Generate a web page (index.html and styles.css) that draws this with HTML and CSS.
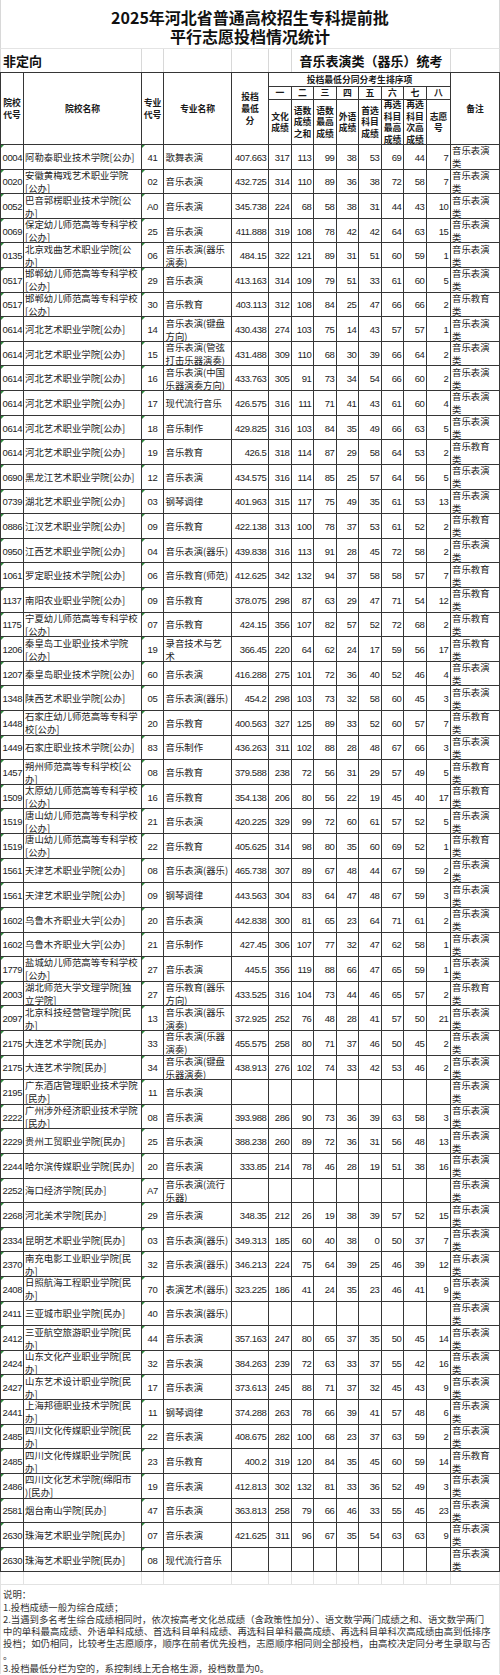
FILE: index.html
```html
<!DOCTYPE html>
<html lang="zh-CN">
<head>
<meta charset="utf-8">
<title>2025年河北省普通高校招生专科提前批平行志愿投档情况统计</title>
<link rel="stylesheet" href="styles.css">
</head>
<body>
<div class="sheet">
  <div class="title">
    <p>2025年河北省普通高校招生专科提前批</p>
    <p>平行志愿投档情况统计</p>
  </div>

  <div class="band">
    <div class="b-left">非定向</div>
    <div></div><div></div><div></div><div></div>
    <div class="b-mid">音乐表演类（器乐）统考</div>
    <div></div>
  </div>

  <div class="tbl">
    <div class="hdr">
      <div class="hc1"><span>院校<br>代号</span></div>
      <div class="hc2">院校名称</div>
      <div class="hc3"><span>专业<br>代号</span></div>
      <div class="hc4">专业名称</div>
      <div class="hc5"><span>投档<br>最低<br>分</span></div>
      <div class="grp">投档最低分同分考生排序项</div>
      <div class="hc14">备注</div>
      <div class="ord">一</div><div class="ord">二</div><div class="ord">三</div><div class="ord">四</div><div class="ord">五</div><div class="ord">六</div><div class="ord">七</div><div class="ord">八</div>
      <div class="lab"><span>文化<br>成绩</span></div>
      <div class="lab"><span>语数<br>成绩<br>之和</span></div>
      <div class="lab"><span>语数<br>最高<br>成绩</span></div>
      <div class="lab"><span>外语<br>成绩</span></div>
      <div class="lab"><span>首选<br>科目<br>成绩</span></div>
      <div class="lab"><span>再选<br>科目<br>最高<br>成绩</span></div>
      <div class="lab"><span>再选<br>科目<br>次高<br>成绩</span></div>
      <div class="lab"><span>志愿<br>号</span></div>
    </div>

    <div class="row"><div>0004</div><div>阿勒泰职业技术学院[公办]</div><div>41</div><div>歌舞表演</div><div>407.663</div><div>317</div><div>113</div><div>99</div><div>38</div><div>53</div><div>69</div><div>44</div><div>7</div><div><span>音乐表演<br>类</span></div></div>
    <div class="row"><div>0020</div><div><span>安徽黄梅戏艺术职业学院<br>[公办]</span></div><div>02</div><div>音乐表演</div><div>432.725</div><div>314</div><div>110</div><div>89</div><div>36</div><div>38</div><div>72</div><div>58</div><div>7</div><div><span>音乐表演<br>类</span></div></div>
    <div class="row"><div>0052</div><div><span>巴音郭楞职业技术学院[公<br>办]</span></div><div>A0</div><div>音乐表演</div><div>345.738</div><div>224</div><div>68</div><div>58</div><div>38</div><div>31</div><div>44</div><div>43</div><div>10</div><div><span>音乐表演<br>类</span></div></div>
    <div class="row"><div>0069</div><div><span>保定幼儿师范高等专科学校<br>[公办]</span></div><div>25</div><div>音乐表演</div><div>411.888</div><div>319</div><div>108</div><div>78</div><div>42</div><div>42</div><div>64</div><div>63</div><div>15</div><div><span>音乐表演<br>类</span></div></div>
    <div class="row"><div>0135</div><div><span>北京戏曲艺术职业学院[公<br>办]</span></div><div>06</div><div><span>音乐表演(器乐<br>演奏)</span></div><div>484.15</div><div>322</div><div>121</div><div>89</div><div>31</div><div>51</div><div>60</div><div>59</div><div>1</div><div><span>音乐表演<br>类</span></div></div>
    <div class="row"><div>0517</div><div><span>邯郸幼儿师范高等专科学校<br>[公办]</span></div><div>29</div><div>音乐表演</div><div>413.163</div><div>314</div><div>109</div><div>79</div><div>51</div><div>33</div><div>61</div><div>60</div><div>5</div><div><span>音乐表演<br>类</span></div></div>
    <div class="row"><div>0517</div><div><span>邯郸幼儿师范高等专科学校<br>[公办]</span></div><div>30</div><div>音乐教育</div><div>403.113</div><div>312</div><div>108</div><div>84</div><div>25</div><div>47</div><div>66</div><div>66</div><div>2</div><div><span>音乐教育<br>类</span></div></div>
    <div class="row"><div>0614</div><div>河北艺术职业学院[公办]</div><div>14</div><div><span>音乐表演(键盘<br>方向)</span></div><div>430.438</div><div>274</div><div>103</div><div>75</div><div>14</div><div>43</div><div>57</div><div>57</div><div>1</div><div><span>音乐表演<br>类</span></div></div>
    <div class="row"><div>0614</div><div>河北艺术职业学院[公办]</div><div>15</div><div><span>音乐表演(管弦<br>打击乐器演奏)</span></div><div>431.488</div><div>309</div><div>110</div><div>68</div><div>30</div><div>39</div><div>66</div><div>64</div><div>2</div><div><span>音乐表演<br>类</span></div></div>
    <div class="row"><div>0614</div><div>河北艺术职业学院[公办]</div><div>16</div><div><span>音乐表演(中国<br>乐器演奏方向)</span></div><div>433.763</div><div>305</div><div>91</div><div>73</div><div>34</div><div>54</div><div>66</div><div>60</div><div>2</div><div><span>音乐表演<br>类</span></div></div>
    <div class="row"><div>0614</div><div>河北艺术职业学院[公办]</div><div>17</div><div>现代流行音乐</div><div>426.575</div><div>316</div><div>111</div><div>71</div><div>41</div><div>43</div><div>61</div><div>60</div><div>4</div><div><span>音乐表演<br>类</span></div></div>
    <div class="row"><div>0614</div><div>河北艺术职业学院[公办]</div><div>18</div><div>音乐制作</div><div>429.825</div><div>316</div><div>103</div><div>84</div><div>35</div><div>49</div><div>66</div><div>63</div><div>5</div><div><span>音乐表演<br>类</span></div></div>
    <div class="row"><div>0614</div><div>河北艺术职业学院[公办]</div><div>19</div><div>音乐教育</div><div>426.5</div><div>318</div><div>114</div><div>87</div><div>29</div><div>58</div><div>64</div><div>53</div><div>2</div><div><span>音乐教育<br>类</span></div></div>
    <div class="row"><div>0690</div><div>黑龙江艺术职业学院[公办]</div><div>12</div><div>音乐表演</div><div>434.575</div><div>316</div><div>114</div><div>85</div><div>25</div><div>57</div><div>64</div><div>56</div><div>5</div><div><span>音乐表演<br>类</span></div></div>
    <div class="row"><div>0739</div><div>湖北艺术职业学院[公办]</div><div>03</div><div>钢琴调律</div><div>401.963</div><div>315</div><div>117</div><div>75</div><div>49</div><div>35</div><div>61</div><div>53</div><div>13</div><div><span>音乐表演<br>类</span></div></div>
    <div class="row"><div>0886</div><div>江汉艺术职业学院[公办]</div><div>09</div><div>音乐教育</div><div>422.138</div><div>313</div><div>100</div><div>78</div><div>37</div><div>53</div><div>61</div><div>52</div><div>2</div><div><span>音乐教育<br>类</span></div></div>
    <div class="row"><div>0950</div><div>江西艺术职业学院[公办]</div><div>04</div><div>音乐表演(器乐)</div><div>439.838</div><div>316</div><div>113</div><div>91</div><div>28</div><div>45</div><div>72</div><div>58</div><div>2</div><div><span>音乐表演<br>类</span></div></div>
    <div class="row"><div>1061</div><div>罗定职业技术学院[公办]</div><div>06</div><div>音乐教育(师范)</div><div>412.625</div><div>342</div><div>132</div><div>94</div><div>37</div><div>58</div><div>58</div><div>57</div><div>7</div><div><span>音乐教育<br>类</span></div></div>
    <div class="row"><div>1137</div><div>南阳农业职业学院[公办]</div><div>09</div><div>音乐教育</div><div>378.075</div><div>298</div><div>87</div><div>63</div><div>29</div><div>47</div><div>71</div><div>54</div><div>12</div><div><span>音乐教育<br>类</span></div></div>
    <div class="row"><div>1175</div><div><span>宁夏幼儿师范高等专科学校<br>[公办]</span></div><div>07</div><div>音乐教育</div><div>424.15</div><div>356</div><div>107</div><div>82</div><div>57</div><div>52</div><div>72</div><div>68</div><div>2</div><div><span>音乐教育<br>类</span></div></div>
    <div class="row"><div>1206</div><div><span>秦皇岛工业职业技术学院<br>[公办]</span></div><div>19</div><div><span>录音技术与艺<br>术</span></div><div>366.45</div><div>220</div><div>64</div><div>62</div><div>24</div><div>17</div><div>59</div><div>56</div><div>17</div><div><span>音乐教育<br>类</span></div></div>
    <div class="row"><div>1207</div><div>秦皇岛职业技术学院[公办]</div><div>60</div><div>音乐表演</div><div>416.288</div><div>275</div><div>101</div><div>72</div><div>36</div><div>40</div><div>52</div><div>46</div><div>4</div><div><span>音乐表演<br>类</span></div></div>
    <div class="row"><div>1348</div><div>陕西艺术职业学院[公办]</div><div>05</div><div>音乐表演(器乐)</div><div>454.2</div><div>298</div><div>103</div><div>73</div><div>32</div><div>58</div><div>60</div><div>45</div><div>3</div><div><span>音乐表演<br>类</span></div></div>
    <div class="row"><div>1448</div><div><span>石家庄幼儿师范高等专科学<br>校[公办]</span></div><div>20</div><div>音乐教育</div><div>400.563</div><div>327</div><div>125</div><div>89</div><div>33</div><div>52</div><div>60</div><div>57</div><div>7</div><div><span>音乐教育<br>类</span></div></div>
    <div class="row"><div>1449</div><div>石家庄职业技术学院[公办]</div><div>83</div><div>音乐制作</div><div>436.263</div><div>311</div><div>102</div><div>88</div><div>28</div><div>48</div><div>67</div><div>66</div><div>3</div><div><span>音乐表演<br>类</span></div></div>
    <div class="row"><div>1457</div><div><span>朔州师范高等专科学校[公<br>办]</span></div><div>08</div><div>音乐教育</div><div>379.588</div><div>238</div><div>72</div><div>56</div><div>31</div><div>29</div><div>57</div><div>49</div><div>5</div><div><span>音乐教育<br>类</span></div></div>
    <div class="row"><div>1509</div><div><span>太原幼儿师范高等专科学校<br>[公办]</span></div><div>16</div><div>音乐教育</div><div>354.138</div><div>206</div><div>80</div><div>56</div><div>22</div><div>19</div><div>45</div><div>40</div><div>17</div><div><span>音乐教育<br>类</span></div></div>
    <div class="row"><div>1519</div><div><span>唐山幼儿师范高等专科学校<br>[公办]</span></div><div>21</div><div>音乐表演</div><div>420.225</div><div>329</div><div>99</div><div>72</div><div>60</div><div>61</div><div>57</div><div>52</div><div>5</div><div><span>音乐表演<br>类</span></div></div>
    <div class="row"><div>1519</div><div><span>唐山幼儿师范高等专科学校<br>[公办]</span></div><div>22</div><div>音乐教育</div><div>405.625</div><div>314</div><div>98</div><div>80</div><div>35</div><div>60</div><div>69</div><div>52</div><div>1</div><div><span>音乐教育<br>类</span></div></div>
    <div class="row"><div>1561</div><div>天津艺术职业学院[公办]</div><div>08</div><div>音乐表演(器乐)</div><div>465.738</div><div>307</div><div>89</div><div>67</div><div>48</div><div>44</div><div>67</div><div>59</div><div>2</div><div><span>音乐表演<br>类</span></div></div>
    <div class="row"><div>1561</div><div>天津艺术职业学院[公办]</div><div>09</div><div>钢琴调律</div><div>443.563</div><div>304</div><div>83</div><div>64</div><div>47</div><div>48</div><div>67</div><div>59</div><div>3</div><div><span>音乐表演<br>类</span></div></div>
    <div class="row"><div>1602</div><div>乌鲁木齐职业大学[公办]</div><div>20</div><div>音乐表演</div><div>442.838</div><div>300</div><div>81</div><div>65</div><div>23</div><div>64</div><div>71</div><div>61</div><div>2</div><div><span>音乐表演<br>类</span></div></div>
    <div class="row"><div>1602</div><div>乌鲁木齐职业大学[公办]</div><div>21</div><div>音乐制作</div><div>427.45</div><div>306</div><div>107</div><div>77</div><div>32</div><div>47</div><div>62</div><div>58</div><div>1</div><div><span>音乐表演<br>类</span></div></div>
    <div class="row"><div>1779</div><div><span>盐城幼儿师范高等专科学校<br>[公办]</span></div><div>27</div><div>音乐表演</div><div>445.5</div><div>356</div><div>119</div><div>88</div><div>66</div><div>47</div><div>65</div><div>59</div><div>1</div><div><span>音乐表演<br>类</span></div></div>
    <div class="row"><div>2003</div><div><span>湖北师范大学文理学院[独<br>立学院]</span></div><div>27</div><div><span>音乐教育(器乐<br>方向)</span></div><div>433.525</div><div>316</div><div>104</div><div>73</div><div>44</div><div>46</div><div>65</div><div>57</div><div>2</div><div><span>音乐教育<br>类</span></div></div>
    <div class="row"><div>2097</div><div><span>北京科技经营管理学院[民<br>办]</span></div><div>13</div><div><span>音乐表演(器乐<br>演奏)</span></div><div>372.925</div><div>252</div><div>76</div><div>48</div><div>28</div><div>41</div><div>57</div><div>50</div><div>21</div><div><span>音乐表演<br>类</span></div></div>
    <div class="row"><div>2175</div><div>大连艺术学院[民办]</div><div>33</div><div><span>音乐表演(乐器<br>演奏)</span></div><div>455.575</div><div>258</div><div>80</div><div>71</div><div>37</div><div>46</div><div>50</div><div>45</div><div>2</div><div><span>音乐表演<br>类</span></div></div>
    <div class="row"><div>2175</div><div>大连艺术学院[民办]</div><div>34</div><div><span>音乐表演(键盘<br>乐器演奏)</span></div><div>438.913</div><div>276</div><div>102</div><div>74</div><div>33</div><div>42</div><div>53</div><div>46</div><div>2</div><div><span>音乐表演<br>类</span></div></div>
    <div class="row"><div>2195</div><div><span>广东酒店管理职业技术学院<br>[民办]</span></div><div>11</div><div>音乐表演</div><div></div><div></div><div></div><div></div><div></div><div></div><div></div><div></div><div></div><div><span>音乐表演<br>类</span></div></div>
    <div class="row"><div>2222</div><div><span>广州涉外经济职业技术学院<br>[民办]</span></div><div>08</div><div>音乐表演</div><div>393.988</div><div>286</div><div>90</div><div>73</div><div>36</div><div>39</div><div>63</div><div>58</div><div>3</div><div><span>音乐表演<br>类</span></div></div>
    <div class="row"><div>2229</div><div>贵州工贸职业学院[民办]</div><div>25</div><div>音乐表演</div><div>388.238</div><div>260</div><div>89</div><div>72</div><div>36</div><div>31</div><div>56</div><div>48</div><div>13</div><div><span>音乐表演<br>类</span></div></div>
    <div class="row"><div>2244</div><div>哈尔滨传媒职业学院[民办]</div><div>20</div><div>音乐表演</div><div>333.85</div><div>214</div><div>78</div><div>46</div><div>28</div><div>19</div><div>51</div><div>38</div><div>16</div><div><span>音乐表演<br>类</span></div></div>
    <div class="row"><div>2252</div><div>海口经济学院[民办]</div><div>A7</div><div><span>音乐表演(流行<br>乐器)</span></div><div></div><div></div><div></div><div></div><div></div><div></div><div></div><div></div><div></div><div><span>音乐表演<br>类</span></div></div>
    <div class="row"><div>2268</div><div>河北美术学院[民办]</div><div>29</div><div>音乐表演</div><div>348.35</div><div>212</div><div>26</div><div>19</div><div>38</div><div>39</div><div>57</div><div>52</div><div>15</div><div><span>音乐表演<br>类</span></div></div>
    <div class="row"><div>2334</div><div>昆明艺术职业学院[民办]</div><div>03</div><div>音乐表演(器乐)</div><div>349.313</div><div>185</div><div>60</div><div>40</div><div>38</div><div>0</div><div>50</div><div>37</div><div>7</div><div><span>音乐表演<br>类</span></div></div>
    <div class="row"><div>2370</div><div><span>南充电影工业职业学院[民<br>办]</span></div><div>32</div><div>音乐表演(器乐)</div><div>346.213</div><div>224</div><div>75</div><div>64</div><div>39</div><div>25</div><div>46</div><div>39</div><div>12</div><div><span>音乐表演<br>类</span></div></div>
    <div class="row"><div>2408</div><div><span>日照航海工程职业学院[民<br>办]</span></div><div>70</div><div>表演艺术(器乐)</div><div>323.225</div><div>186</div><div>41</div><div>24</div><div>35</div><div>23</div><div>46</div><div>41</div><div>9</div><div><span>音乐表演<br>类</span></div></div>
    <div class="row"><div>2411</div><div>三亚城市职业学院[民办]</div><div>40</div><div>音乐表演(器乐)</div><div></div><div></div><div></div><div></div><div></div><div></div><div></div><div></div><div></div><div><span>音乐表演<br>类</span></div></div>
    <div class="row"><div>2412</div><div><span>三亚航空旅游职业学院[民<br>办]</span></div><div>44</div><div>音乐表演</div><div>357.163</div><div>247</div><div>80</div><div>65</div><div>37</div><div>35</div><div>50</div><div>45</div><div>14</div><div><span>音乐表演<br>类</span></div></div>
    <div class="row"><div>2424</div><div><span>山东文化产业职业学院[民<br>办]</span></div><div>32</div><div>音乐表演</div><div>384.263</div><div>239</div><div>72</div><div>63</div><div>33</div><div>37</div><div>55</div><div>42</div><div>16</div><div><span>音乐表演<br>类</span></div></div>
    <div class="row"><div>2427</div><div><span>山东艺术设计职业学院[民<br>办]</span></div><div>17</div><div>音乐表演</div><div>373.613</div><div>245</div><div>88</div><div>71</div><div>37</div><div>32</div><div>45</div><div>43</div><div>9</div><div><span>音乐表演<br>类</span></div></div>
    <div class="row"><div>2441</div><div><span>上海邦德职业技术学院[民<br>办]</span></div><div>11</div><div>钢琴调律</div><div>374.288</div><div>263</div><div>78</div><div>66</div><div>39</div><div>41</div><div>57</div><div>48</div><div>6</div><div><span>音乐表演<br>类</span></div></div>
    <div class="row"><div>2485</div><div><span>四川文化传媒职业学院[民<br>办]</span></div><div>22</div><div>音乐表演</div><div>408.675</div><div>282</div><div>100</div><div>68</div><div>23</div><div>37</div><div>63</div><div>59</div><div>2</div><div><span>音乐表演<br>类</span></div></div>
    <div class="row"><div>2485</div><div><span>四川文化传媒职业学院[民<br>办]</span></div><div>23</div><div>音乐教育</div><div>400.2</div><div>319</div><div>120</div><div>84</div><div>35</div><div>45</div><div>60</div><div>59</div><div>14</div><div><span>音乐教育<br>类</span></div></div>
    <div class="row"><div>2486</div><div><span>四川文化艺术学院(绵阳市<br>)[民办]</span></div><div>19</div><div>音乐表演</div><div>412.813</div><div>302</div><div>132</div><div>81</div><div>33</div><div>36</div><div>52</div><div>49</div><div>3</div><div><span>音乐表演<br>类</span></div></div>
    <div class="row"><div>2581</div><div>烟台南山学院[民办]</div><div>47</div><div>音乐表演</div><div>363.813</div><div>258</div><div>79</div><div>66</div><div>46</div><div>33</div><div>55</div><div>45</div><div>23</div><div><span>音乐表演<br>类</span></div></div>
    <div class="row"><div>2630</div><div>珠海艺术职业学院[民办]</div><div>07</div><div>音乐表演</div><div>421.625</div><div>311</div><div>96</div><div>67</div><div>35</div><div>54</div><div>63</div><div>63</div><div>9</div><div><span>音乐表演<br>类</span></div></div>
    <div class="row"><div>2630</div><div>珠海艺术职业学院[民办]</div><div>08</div><div>现代流行音乐</div><div></div><div></div><div></div><div></div><div></div><div></div><div></div><div></div><div></div><div><span>音乐表演<br>类</span></div></div>
  </div>

  <div class="ghost">
    <div></div><div></div><div></div><div></div><div></div><div></div><div></div>
    <div></div><div></div><div></div><div></div><div></div><div></div><div></div>
  </div>

  <div class="notes">
    <p>说明：</p>
    <p>1.投档成绩一般为综合成绩；</p>
    <p>2.当遇到多名考生综合成绩相同时，依次按高考文化总成绩（含政策性加分）、语文数学两门成绩之和、语文数学两门</p>
    <p>中的单科最高成绩、外语单科成绩、首选科目单科成绩、再选科目单科最高成绩、再选科目单科次高成绩由高到低排序</p>
    <p>投档；如仍相同，比较考生志愿顺序，顺序在前者优先投档，志愿顺序相同则全部投档，由高校决定同分考生录取与否</p>
    <p>。</p>
    <p>3.投档最低分栏为空的，系控制线上无合格生源，投档数量为0。</p>
  </div>
</div>
</body>
</html>
```
FILE: styles.css
```css
:root {
  --cols: 23px 118px 22px 68px 37px 23px 22px 23px 22px 23px 22px 23px 24px 49px;
  --line: #363636;
  --grid: #d8d8d8;
  --num: "Liberation Sans", "Noto Sans", sans-serif;
}

* { box-sizing: border-box; }

html, body {
  margin: 0;
  padding: 0;
  background: #fff;
  overflow: hidden;
}

body {
  width: 500px;
  color: #232323;
  font-family: "Noto Sans CJK SC", "Liberation Sans", sans-serif;
}

.sheet { width: 500px; }

/* title */
.title {
  height: 49px;
  padding-top: 7.5px;
  border-left: 1px solid var(--grid);
  border-right: 1px solid var(--grid);
  border-bottom: 1px solid #e4e4e4;
  text-align: center;
  font-size: 16px;
  line-height: 19.5px;
  font-weight: 700;
  color: #111;
}
.title p { margin: 0; }

/* 非定向 band */
.band {
  display: grid;
  grid-template-columns: var(--cols);
  height: 23px;
  border-left: 1px solid var(--grid);
}
.band > div {
  border-right: 1px solid var(--grid);
  display: flex;
  align-items: center;
  font-size: 13px;
  font-weight: 700;
  color: #111;
  white-space: nowrap;
}
.band .b-left { grid-column: 1 / 3; padding-left: 2px; }
.band .b-mid { grid-column: 7 / 14; justify-content: center; }

/* table */
.tbl {
  border-left: 1px solid var(--line);
  border-top: 1px solid var(--line);
}

.hdr {
  display: grid;
  grid-template-columns: var(--cols);
  grid-template-rows: 14px 13px 45px;
}
.hdr > div {
  border-right: 1px solid var(--line);
  border-bottom: 1px solid var(--line);
  display: flex;
  align-items: center;
  justify-content: center;
  text-align: center;
  font-size: 8.8px;
  font-weight: 700;
  line-height: 12px;
  white-space: nowrap;
  color: #1a1a1a;
}
.hdr .hc1 { grid-column: 1; grid-row: 1 / 4; }
.hdr .hc2 { grid-column: 2; grid-row: 1 / 4; }
.hdr .hc3 { grid-column: 3; grid-row: 1 / 4; }
.hdr .hc4 { grid-column: 4; grid-row: 1 / 4; }
.hdr .hc5 { grid-column: 5; grid-row: 1 / 4; }
.hdr .hc14 { grid-column: 14; grid-row: 1 / 4; }
.hdr .grp { grid-column: 6 / 14; grid-row: 1; }
.hdr .ord { grid-row: 2; }
.hdr .lab { grid-row: 3; line-height: 11.5px; }

.row {
  display: grid;
  grid-template-columns: var(--cols);
  height: 24.62px;
}
.row > div {
  position: relative;
  border-right: 1px solid var(--line);
  border-bottom: 1px solid var(--line);
  overflow: hidden;
  display: flex;
  align-items: center;
  white-space: nowrap;
  font-size: 9.4px;
  line-height: 13px;
  padding-top: 1px;
}
.row > div:nth-child(1) {
  font-family: var(--num);
  font-size: 9.5px;
  letter-spacing: -0.4px;
  padding-left: 1.5px;
}
.row > div:nth-child(2) { padding-left: 1px; }
.row > div:nth-child(3) {
  font-family: var(--num);
  font-size: 9.5px;
  letter-spacing: -0.4px;
  justify-content: center;
}
.row > div:nth-child(4) { padding-left: 1.5px; }
.row > div:nth-child(n+5):nth-child(-n+13) {
  font-family: var(--num);
  font-size: 9.5px;
  letter-spacing: -0.4px;
  justify-content: flex-end;
  padding-right: 1.5px;
}
.row > div:nth-child(14) { padding-left: 1px; }

/* Excel "number stored as text" markers */
.row > div:nth-child(1)::before,
.row > div:nth-child(3)::before {
  content: "";
  position: absolute;
  left: 0;
  top: 0;
  border-top: 3px solid #2e8b3e;
  border-right: 3px solid transparent;
}

/* empty grid row under the table */
.ghost {
  display: grid;
  grid-template-columns: var(--cols);
  height: 13px;
  border-left: 1px solid #e2e2e2;
}
.ghost > div {
  border-right: 1px solid #e2e2e2;
  border-bottom: 1px solid #e2e2e2;
}

/* notes */
.notes {
  height: 89px;
  padding: 3px 0 0 2px;
  border-left: 1px solid #e2e2e2;
  border-right: 1px solid #e2e2e2;
  font-size: 9.4px;
  line-height: 12.2px;
  color: #333;
  white-space: nowrap;
}
.notes p { margin: 0; }
```
